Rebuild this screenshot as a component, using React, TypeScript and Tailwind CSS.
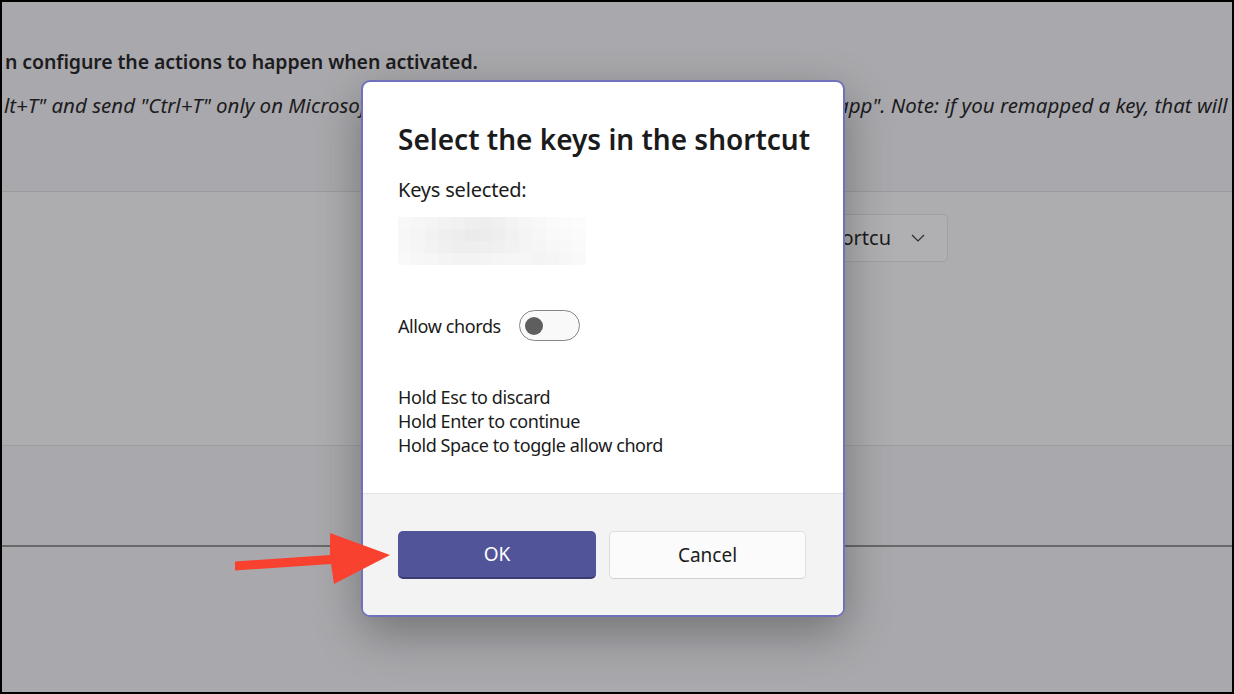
import React from "react";

const blurRows: string[][] = [
  ["bg-[#f8f8f8]", "bg-[#f6f6f6]", "bg-[#f4f4f4]", "bg-[#f2f2f2]", "bg-[#f1f1f1]", "bg-[#efefef]", "bg-[#eeeeee]", "bg-[#f0f0f0]", "bg-[#f3f3f3]", "bg-[#f6f6f6]", "bg-[#f8f8f8]", "bg-[#fafafa]", "bg-[#fbfbfb]", "bg-[#fcfcfc]"],
  ["bg-[#f7f7f7]", "bg-[#f5f5f5]", "bg-[#f2f2f2]", "bg-[#efefef]", "bg-[#ededed]", "bg-[#ebebeb]", "bg-[#ececec]", "bg-[#eeeeee]", "bg-[#f1f1f1]", "bg-[#f4f4f4]", "bg-[#f7f7f7]", "bg-[#f9f9f9]", "bg-[#fafafa]", "bg-[#fbfbfb]"],
  ["bg-[#f7f7f7]", "bg-[#f5f5f5]", "bg-[#f3f3f3]", "bg-[#f0f0f0]", "bg-[#eeeeee]", "bg-[#eeeeee]", "bg-[#efefef]", "bg-[#f0f0f0]", "bg-[#f2f2f2]", "bg-[#f4f4f4]", "bg-[#f5f5f5]", "bg-[#f7f7f7]", "bg-[#f8f8f8]", "bg-[#fafafa]"],
  ["bg-[#f9f9f9]", "bg-[#f7f7f7]", "bg-[#f6f6f6]", "bg-[#f4f4f4]", "bg-[#f3f3f3]", "bg-[#f3f3f3]", "bg-[#f4f4f4]", "bg-[#f5f5f5]", "bg-[#f6f6f6]", "bg-[#f6f6f6]", "bg-[#f4f4f4]", "bg-[#f5f5f5]", "bg-[#f7f7f7]", "bg-[#f9f9f9]"],
];

export default function App() {
  return (
    <div className="w-[1234px] h-[694px] bg-black p-[2px] font-['Noto_Sans','Open_Sans',sans-serif]">
      <div className="relative w-full h-full overflow-hidden bg-[#a9a8ac] flex flex-col">
        {/* top description */}
        <div className="h-[190px] flex flex-col border-b border-[#9b9b9e] shrink-0">
          <div className="mt-[46px] pl-[3px] text-[19.5px] leading-[28px] font-semibold tracking-[-0.1px] text-[#1c1c1e] whitespace-nowrap">
            n configure the actions to happen when activated.
          </div>
          <div className="mt-[15px] flex text-[20.5px] leading-[28px] italic text-[#1c1c1e] whitespace-nowrap">
            <span className="w-[835px] overflow-hidden pl-[2px] shrink-0">
              lt+T" and send "Ctrl+T" only on Microsoft Edge when it is the foreground app
            </span>
            <span className="shrink-0">app". Note: if you remapped a key, that will</span>
          </div>
        </div>
        {/* card */}
        <div className="h-[254px] bg-[#adadaf] border-b border-[#9d9da0] shrink-0 flex justify-end items-start pr-[284px]">
          <div className="mt-[22px] h-[48px] w-[220px] rounded-[5px] border border-[#a0a0a3] bg-[#b0b0b2] flex items-center justify-end pr-[22px] gap-[20px]">
            <span className="text-[20px] text-[#1c1c1e]">Send Shortcu</span>
            <svg width="14" height="8" viewBox="0 0 14 8" fill="none">
              <path d="M1 1l6 6 6-6" stroke="#2b2b2b" strokeWidth="1.2" />
            </svg>
          </div>
        </div>
        <div className="mt-[99px] h-[2px] bg-[#68686b] shrink-0" />

        {/* dialog */}
        <div className="absolute left-[359px] top-[78px] w-[484px] h-[537px] rounded-[9px] border-2 border-[#7070bd] bg-white overflow-hidden flex flex-col shadow-[0_16px_48px_rgba(0,0,0,0.32)]">
          <div className="h-[411px] shrink-0 pl-[35px] flex flex-col text-[#1b1b1b]">
            <div className="mt-[40px] text-[28px] leading-[34px] font-semibold whitespace-nowrap">
              Select the keys in the shortcut
            </div>
            <div className="mt-[21px] text-[20px] leading-[26px] tracking-[-0.2px]">Keys selected:</div>
            <div className="mt-[14px] w-[188px] h-[48px] flex flex-col">
              {blurRows.map((row, i) => (
                <div key={i} className="flex flex-1">
                  {row.map((c, j) => (
                    <div key={j} className={`flex-1 ${c}`} />
                  ))}
                </div>
              ))}
            </div>
            <div className="mt-[45px] h-[31px] flex items-center gap-[18px]">
              <span className="text-[18px] leading-[24px] tracking-[-0.4px]">Allow chords</span>
              <div className="w-[61px] h-[31px] rounded-full border-[1.5px] border-[#868686] bg-[#f9f9f9] flex items-center pl-[5px]">
                <div className="w-[18px] h-[18px] rounded-full bg-[#5e5e5e]" />
              </div>
            </div>
            <div className="mt-[44px] text-[18px] leading-[24px] tracking-[-0.4px] flex flex-col">
              <span>Hold Esc to discard</span>
              <span>Hold Enter to continue</span>
              <span>Hold Space to toggle allow chord</span>
            </div>
          </div>
          <div className="flex-1 bg-[#f3f3f3] border-t border-[#e3e3e3] pl-[35px] pt-[37px] flex items-start gap-[13px]">
            <button className="w-[198px] h-[48px] rounded-[5px] bg-[#52549a] border-b-2 border-[#393b72] text-white text-[19px] flex items-center justify-center">
              OK
            </button>
            <button className="w-[197px] h-[48px] rounded-[5px] bg-[#fbfbfb] border border-[#dedede] border-b-[#cfcfcf] text-[#1b1b1b] text-[19px] flex items-center justify-center">
              Cancel
            </button>
          </div>
        </div>

        {/* red arrow */}
        <svg className="absolute left-0 top-0" width="1230" height="690" viewBox="2 2 1230 690">
          <polygon
            points="235,561.5 330,555 330,533 390,555 334,584 331,564 235,570.5"
            fill="#f9412f"
          />
        </svg>
      </div>
    </div>
  );
}
